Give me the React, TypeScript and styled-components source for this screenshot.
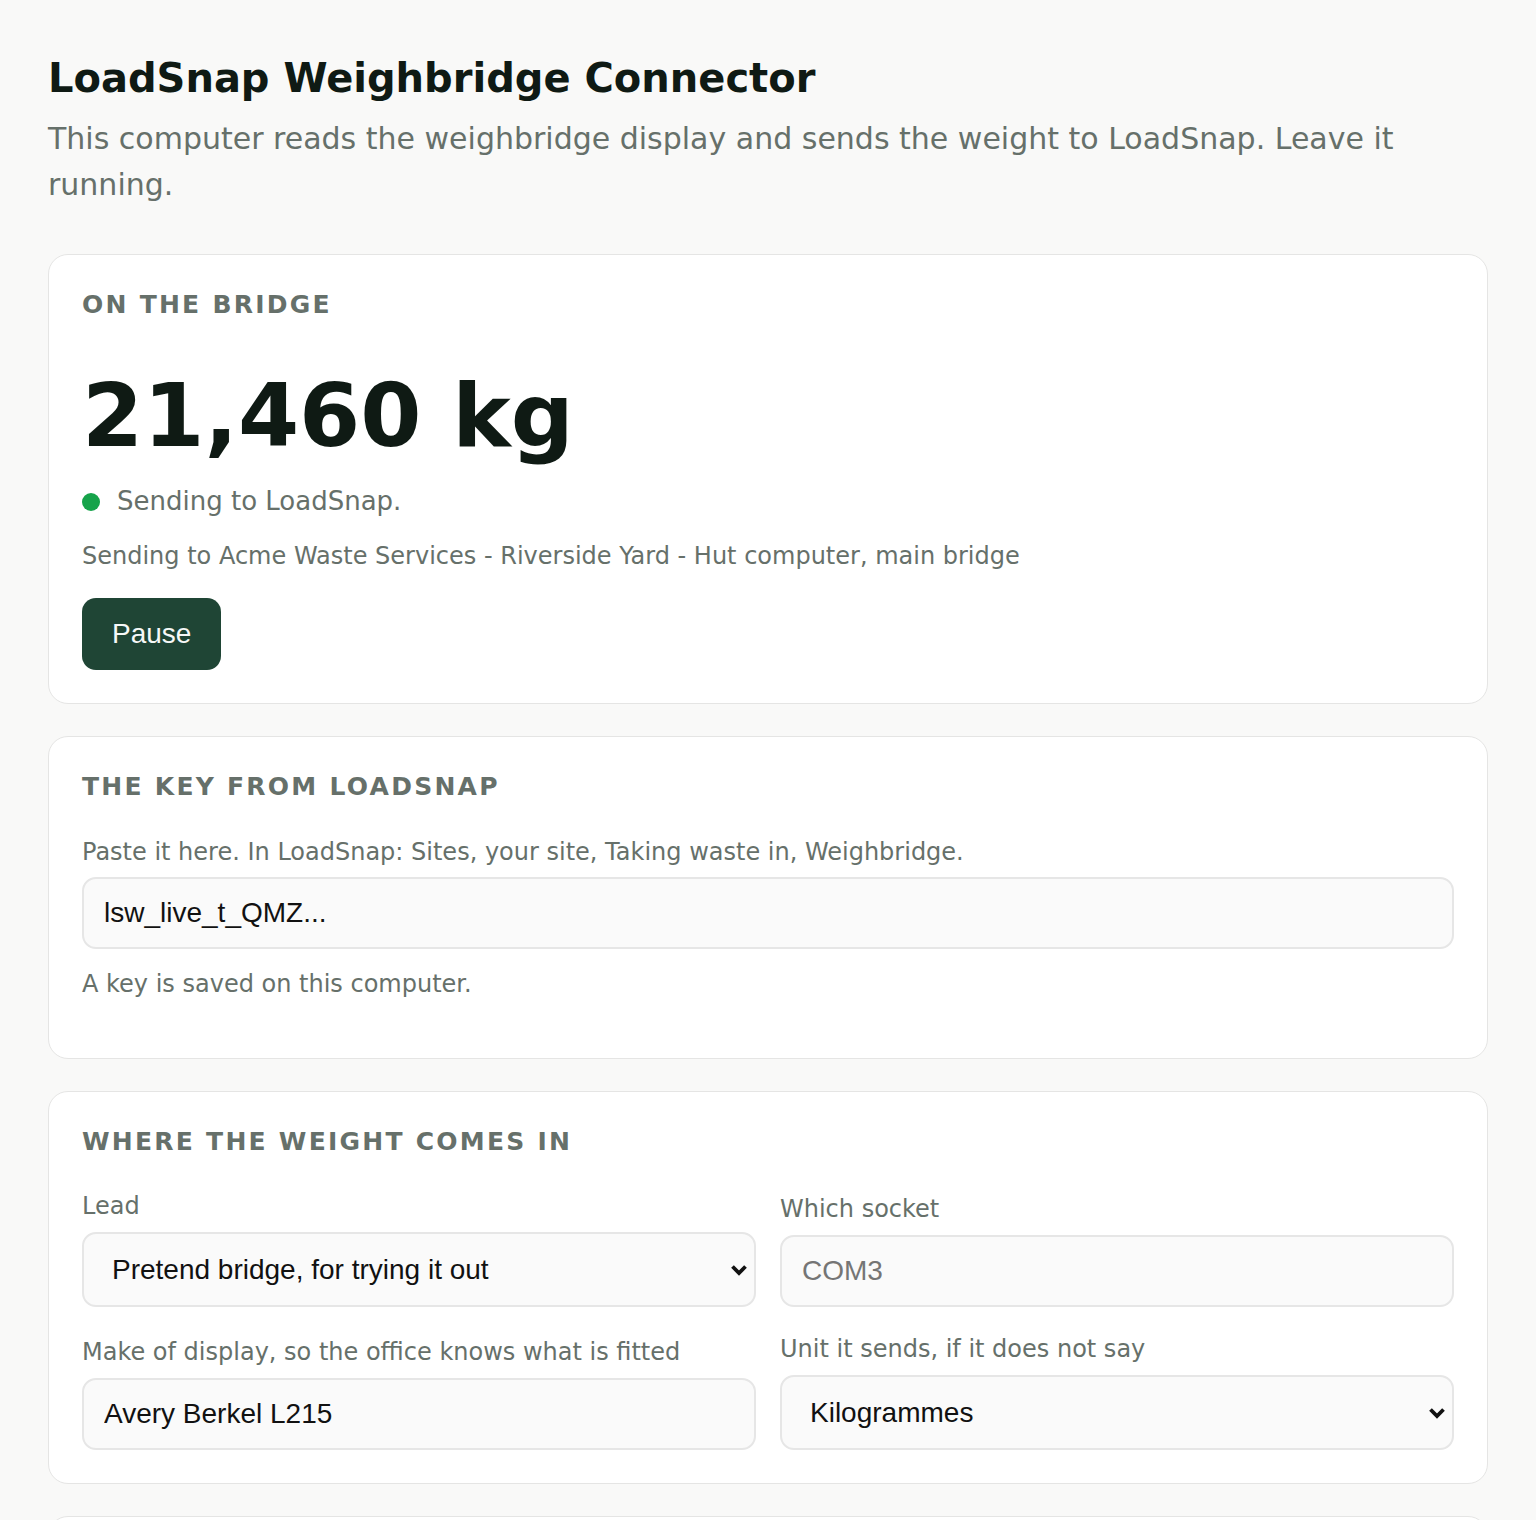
import styled, { createGlobalStyle } from 'styled-components';

const GlobalStyle = createGlobalStyle`
  * {
    box-sizing: border-box;
  }

  body {
    margin: 0;
    background: #f9f9f8;
    color: #0f1a14;
    font-family: 'DejaVu Sans', 'Noto Sans', sans-serif;
  }
`;

type Field = {
  label: string;
  kind: 'select' | 'input';
  value?: string;
  placeholder?: string;
  options?: string[];
};

const connectionFields: Field[] = [
  {
    label: 'Lead',
    kind: 'select',
    value: 'Pretend bridge, for trying it out',
    options: ['Pretend bridge, for trying it out', 'Serial lead (RS-232)', 'Network (TCP)'],
  },
  { label: 'Which socket', kind: 'input', placeholder: 'COM3' },
  { label: 'Make of display, so the office knows what is fitted', kind: 'input', value: 'Avery Berkel L215' },
  {
    label: 'Unit it sends, if it does not say',
    kind: 'select',
    value: 'Kilogrammes',
    options: ['Kilogrammes', 'Tonnes', 'Pounds'],
  },
];

const ChevronDown = () => (
  <Chevron width="18" height="12" viewBox="0 0 18 12" aria-hidden="true">
    <polyline points="2.5,2.5 9,9 15.5,2.5" fill="none" stroke="#111" strokeWidth="3.8" strokeLinejoin="miter" />
  </Chevron>
);

export default function App() {
  return (
    <>
      <GlobalStyle />
      <Page>
        <Header>
          <h1>LoadSnap Weighbridge Connector</h1>
          <p>This computer reads the weighbridge display and sends the weight to LoadSnap. Leave it running.</p>
        </Header>

        <Card>
          <SectionTitle>On the bridge</SectionTitle>
          <Weight>21,460 kg</Weight>
          <Status>
            <Dot />
            Sending to LoadSnap.
          </Status>
          <Muted>Sending to Acme Waste Services - Riverside Yard - Hut computer, main bridge</Muted>
          <PrimaryButton type="button">Pause</PrimaryButton>
        </Card>

        <Card>
          <SectionTitle>The key from LoadSnap</SectionTitle>
          <Muted $below={7}>Paste it here. In LoadSnap: Sites, your site, Taking waste in, Weighbridge.</Muted>
          <TextInput type="text" defaultValue="lsw_live_t_QMZ..." />
          <Note>A key is saved on this computer.</Note>
        </Card>

        <Card>
          <SectionTitle>Where the weight comes in</SectionTitle>
          <FieldGrid>
            {connectionFields.map((f) => (
              <FieldWrap key={f.label}>
                <Label>{f.label}</Label>
                {f.kind === 'select' ? (
                  <SelectWrap>
                    <Select defaultValue={f.value}>
                      {f.options?.map((o) => (
                        <option key={o}>{o}</option>
                      ))}
                    </Select>
                    <ChevronDown />
                  </SelectWrap>
                ) : (
                  <TextInput type="text" defaultValue={f.value} placeholder={f.placeholder} />
                )}
              </FieldWrap>
            ))}
          </FieldGrid>
        </Card>

        <Card>
          <SectionTitle>What it has sent</SectionTitle>
          <Muted>Nothing sent yet today.</Muted>
        </Card>
      </Page>
    </>
  );
}

const Page = styled.main`
  padding: 54px 48px 48px;
  display: flex;
  flex-direction: column;
  gap: 32px;
`;

const Header = styled.header`
  margin-bottom: 14px;

  h1 {
    margin: 0;
    font-size: 40px;
    line-height: 48px;
    font-weight: 700;
    color: #0f1a14;
  }

  p {
    margin: 14px 0 0;
    font-size: 30px;
    line-height: 46px;
    color: #66706a;
  }
`;

const Card = styled.section`
  background: #ffffff;
  border: 1px solid #e5e5e4;
  border-radius: 20px;
  padding: 33px;
  display: flex;
  flex-direction: column;
  align-items: flex-start;
`;

const SectionTitle = styled.h2`
  margin: 0 0 23px;
  font-size: 25px;
  line-height: 34px;
  font-weight: 700;
  letter-spacing: 0.09em;
  text-transform: uppercase;
  color: #66706a;
`;

const Weight = styled.div`
  margin-top: 27px;
  font-size: 88px;
  line-height: 88px;
  font-weight: 700;
  color: #0f1a14;
`;

const Status = styled.div`
  margin-top: 22px;
  display: flex;
  align-items: center;
  gap: 17px;
  font-size: 26px;
  line-height: 39px;
  color: #66706a;
`;

const Dot = styled.span`
  width: 18px;
  height: 18px;
  border-radius: 50%;
  background: #16a34a;
`;

const Muted = styled.p<{ $below?: number }>`
  margin: 17px 0 ${({ $below }) => $below ?? 0}px;
  font-size: 24px;
  line-height: 36px;
  color: #66706a;

  h2 + & {
    margin-top: 7px;
  }
`;

const Note = styled.p`
  margin: 17px 0 23px;
  font-size: 24px;
  line-height: 36px;
  color: #66706a;
`;

const PrimaryButton = styled.button`
  margin-top: 24px;
  padding: 20px 30px;
  border: 0;
  border-radius: 14px;
  background: #1f4535;
  color: #f6f8f7;
  font-family: 'Liberation Sans', Arial, sans-serif;
  font-size: 28px;
  line-height: 32px;
  cursor: pointer;
`;

const TextInput = styled.input`
  width: 100%;
  height: 72px;
  padding: 0 20px;
  border: 2px solid #e6e6e6;
  border-radius: 14px;
  background: #fafafa;
  color: #111111;
  font-family: 'Liberation Sans', Arial, sans-serif;
  font-size: 28px;

  &::placeholder {
    color: #757575;
  }
`;

const SelectWrap = styled.div`
  position: relative;
  width: 100%;
`;

const Select = styled.select`
  display: block;
  width: 100%;
  height: 75px;
  appearance: none;
  padding: 0 40px 0 28px;
  border: 2px solid #e6e6e6;
  border-radius: 14px;
  background: #fafafa;
  color: #111111;
  font-family: 'Liberation Sans', Arial, sans-serif;
  font-size: 28px;
`;

const Chevron = styled.svg`
  position: absolute;
  right: 8px;
  top: 50%;
  transform: translateY(-50%);
  pointer-events: none;
`;

const FieldGrid = styled.div`
  width: 100%;
  margin-top: 6px;
  display: grid;
  grid-template-columns: 1fr 1fr;
  column-gap: 24px;
  row-gap: 24px;
  align-items: end;
`;

const FieldWrap = styled.label`
  display: flex;
  flex-direction: column;
  gap: 8px;
`;

const Label = styled.span`
  font-size: 24px;
  line-height: 36px;
  color: #66706a;
`;
